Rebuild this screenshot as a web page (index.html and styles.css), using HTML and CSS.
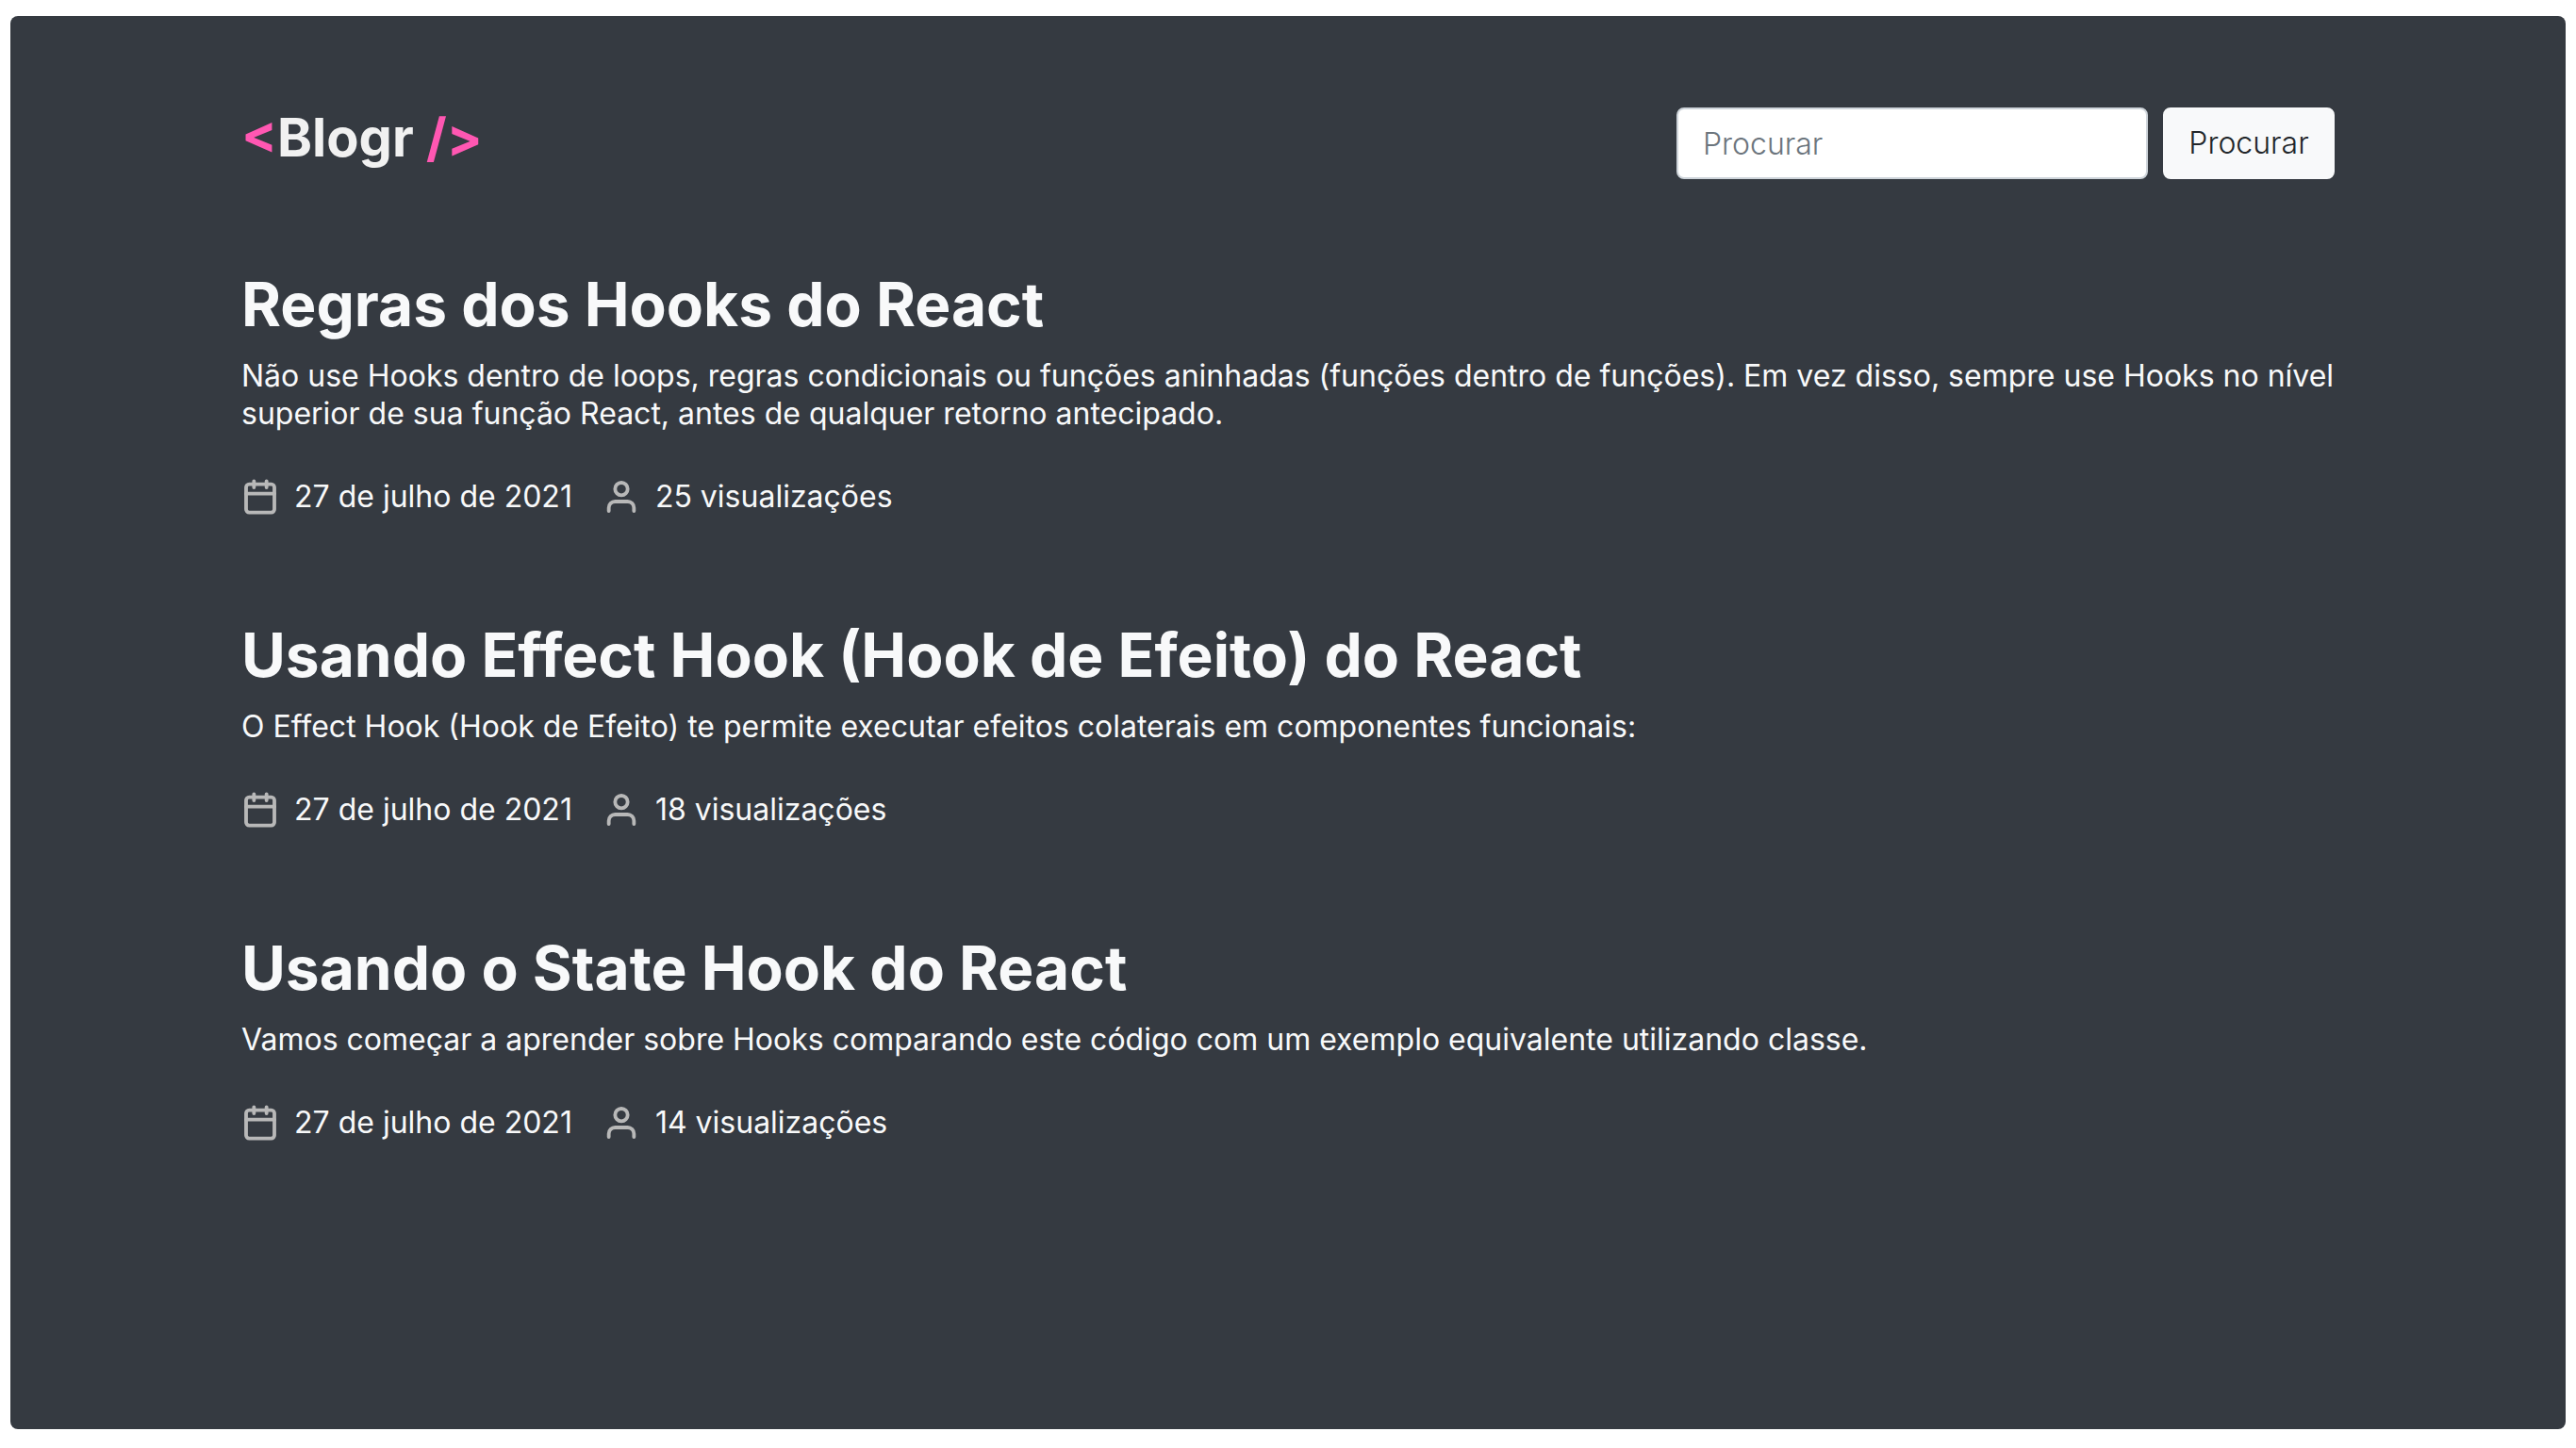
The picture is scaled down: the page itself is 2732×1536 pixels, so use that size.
FILE: index.html
```html
<!DOCTYPE html>
<html lang="pt-BR">
<head>
<meta charset="utf-8">
<meta name="viewport" content="width=device-width, initial-scale=1">
<title>Blogr</title>
<link rel="stylesheet" href="styles.css">
</head>
<body>
<svg class="sprite" aria-hidden="true">
  <symbol id="calendar" viewBox="0 0 24 24"><rect x="3" y="4" width="18" height="18" rx="2"/><path d="M16 2v4M8 2v4M3 10h18"/></symbol>
  <symbol id="user" viewBox="0 0 24 24"><path d="M20 21v-2a4 4 0 0 0-4-4H8a4 4 0 0 0-4 4v2"/><circle cx="12" cy="7" r="4"/></symbol>
</svg>
<div class="panel">
  <div class="container">
    <header class="header">
      <div class="logo"><span class="accent">&lt;</span>Blogr <span class="accent">/&gt;</span></div>
      <form class="search">
        <input class="search-input" type="search" placeholder="Procurar" aria-label="Procurar">
        <button class="search-button" type="submit">Procurar</button>
      </form>
    </header>
    <main class="posts">
      <article class="post">
        <h2 class="title">Regras dos Hooks do React</h2>
        <p class="summary">Não use Hooks dentro de loops, regras condicionais ou funções aninhadas (funções dentro de funções). Em vez disso, sempre use Hooks no nível superior de sua função React, antes de qualquer retorno antecipado.</p>
        <div class="meta">
          <span class="meta-item"><svg class="icon" aria-hidden="true"><use href="#calendar"/></svg>27 de julho de 2021</span>
          <span class="meta-item"><svg class="icon" aria-hidden="true"><use href="#user"/></svg>25 visualizações</span>
        </div>
      </article>
      <article class="post">
        <h2 class="title">Usando Effect Hook (Hook de Efeito) do React</h2>
        <p class="summary">O Effect Hook (Hook de Efeito) te permite executar efeitos colaterais em componentes funcionais:</p>
        <div class="meta">
          <span class="meta-item"><svg class="icon" aria-hidden="true"><use href="#calendar"/></svg>27 de julho de 2021</span>
          <span class="meta-item"><svg class="icon" aria-hidden="true"><use href="#user"/></svg>18 visualizações</span>
        </div>
      </article>
      <article class="post">
        <h2 class="title">Usando o State Hook do React</h2>
        <p class="summary">Vamos começar a aprender sobre Hooks comparando este código com um exemplo equivalente utilizando classe.</p>
        <div class="meta">
          <span class="meta-item"><svg class="icon" aria-hidden="true"><use href="#calendar"/></svg>27 de julho de 2021</span>
          <span class="meta-item"><svg class="icon" aria-hidden="true"><use href="#user"/></svg>14 visualizações</span>
        </div>
      </article>
    </main>
  </div>
</div>
</body>
</html>
```
FILE: styles.css
```css
* { box-sizing: border-box; }
body {
  display: flex;
  min-height: 100vh;
  margin: 0;
  padding: 17px 11px 20px;
  background: #fff;
  color: #f8f9fa;
  font: 32px/40px Inter, sans-serif;
}
.sprite { display: none; }
.panel {
  flex: 1;
  padding: 97px 30px;
  border-radius: 8px;
  background: #353a41;
}
.container { max-width: 2220px; margin: 0 auto; }
.header {
  display: flex;
  justify-content: space-between;
  align-items: center;
  flex-wrap: wrap;
  margin-bottom: 95px;
}
.logo {
  color: #f1f1f1;
  font-size: 56px;
  font-weight: 700;
  line-height: 64px;
  padding-bottom: 12px;
}
.accent { color: #ff57b2; }
.search { display: flex; gap: 16px; }
.search-input, .search-button {
  height: 76px;
  margin: 0;
  border: 2px solid #ced4da;
  border-radius: 8px;
  font: 300 32px/48px Inter, sans-serif;
}
.search-input {
  width: 500px;
  min-width: 0;
  padding: 12px 26px;
  background: #fff;
  color: #495057;
  appearance: none;
}
.search-input::placeholder { color: #6c757d; opacity: 1; }
.search-button {
  min-width: 182px;
  padding: 12px 24px;
  border-color: #f8f9fa;
  background: #f8f9fa;
  color: #212529;
}
.posts { display: flex; flex-direction: column; gap: 110px; }
.title {
  margin: 0 0 18px;
  font-size: 64px;
  font-weight: 700;
  line-height: 76px;
}
.summary { margin: 0 0 48px; }
.meta { display: flex; flex-wrap: wrap; gap: 32px; }
.meta-item { display: flex; align-items: center; gap: 16px; }
.icon {
  width: 40px;
  height: 40px;
  fill: none;
  stroke: #b8b8b8;
  stroke-width: 2.3;
  stroke-linecap: round;
  stroke-linejoin: round;
}
```
